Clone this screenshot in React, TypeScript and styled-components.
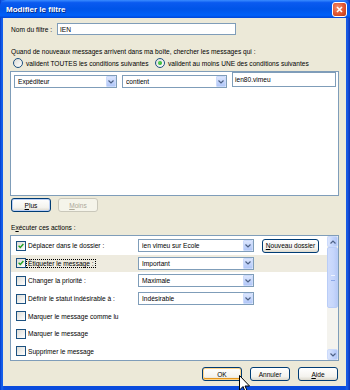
import React from "react";
import styled, { createGlobalStyle } from "styled-components";

const GlobalStyle = createGlobalStyle`
  html, body { margin: 0; padding: 0; background: #0842D6; }
  body {
    font-family: "Liberation Sans", Arial, sans-serif;
    font-size: 6.6px;
    color: #000;
  }
`;

const Window = styled.div`
  position: relative;
  width: 350px;
  height: 390px;
  display: flex;
  flex-direction: column;
  background: linear-gradient(to right, #0339C8 0px, #1665F0 2px, #0A4BDD 4px, #0A4BDD 345px, #1A5EE8 347px, #0A33B8 350px);
`;

const TitleBar = styled.div`
  height: 18px;
  flex: none;
  display: flex;
  align-items: center;
  justify-content: space-between;
  padding: 0 3px 0 6px;
  border-radius: 6px 6px 0 0;
  background: linear-gradient(#3A8CFF 0%, #0A5AF0 15%, #0054E8 50%, #0060F8 85%, #0046D8 100%);
`;

const Title = styled.span`
  color: #fff;
  font-weight: 700;
  font-size: 8px;
  text-shadow: 1px 1px 0 #0A2A80;
`;

const CloseBtn = styled.div`
  width: 13px;
  height: 13px;
  border: 1px solid #fff;
  border-radius: 3px;
  display: flex;
  align-items: center;
  justify-content: center;
  background: radial-gradient(circle at 35% 35%, #F28E6E, #E05530 55%, #B83A18);
`;

const Body = styled.div`
  flex: 1;
  display: flex;
  flex-direction: column;
  margin: 0 4px 4px 3px;
  padding: 0 7px;
  background: #ECE9D8;
`;

const NameRow = styled.div`
  margin-top: 5px;
  height: 12px;
  display: flex;
  align-items: center;
`;

const NameLabel = styled.span`
  width: 46px;
  padding-left: 1px;
`;

const TextField = styled.div<{ $w: number; $h: number }>`
  width: ${(p) => p.$w}px;
  height: ${(p) => p.$h}px;
  box-sizing: border-box;
  border: 1px solid #7F9DB9;
  background: #fff;
  padding-left: 2px;
  display: flex;
  align-items: center;
`;

const Line = styled.div<{ $mt: number }>`
  margin-top: ${(p) => p.$mt}px;
  height: 9px;
  line-height: 9px;
  padding-left: 1px;
  white-space: nowrap;
`;

const RadioRow = styled.div`
  margin-top: 2px;
  height: 10px;
  display: flex;
  align-items: center;
  padding-left: 3px;
`;

const RadioOption = styled.div<{ $w?: number }>`
  display: flex;
  align-items: center;
  gap: 3px;
  width: ${(p) => (p.$w ? `${p.$w}px` : "auto")};
  white-space: nowrap;
`;

const RadioCircle = styled.div<{ $on?: boolean }>`
  width: 10px;
  height: 10px;
  box-sizing: border-box;
  border-radius: 50%;
  border: 1px solid #1C5180;
  background: linear-gradient(135deg, #DCDCD7, #FFFFFF);
  display: flex;
  align-items: center;
  justify-content: center;
  flex: none;
  &::after {
    content: "";
    display: ${(p) => (p.$on ? "block" : "none")};
    width: 4px;
    height: 4px;
    border-radius: 50%;
    background: radial-gradient(circle at 40% 40%, #55D655, #21A121);
  }
`;

const ListBox = styled.div<{ $mt: number; $h: number }>`
  margin-top: ${(p) => p.$mt}px;
  height: ${(p) => p.$h}px;
  flex: none;
  box-sizing: border-box;
  border: 1px solid #7F9DB9;
  background: #fff;
  display: flex;
`;

const CondRow = styled.div`
  display: flex;
  align-items: flex-start;
  gap: 5px;
  padding-left: 3px;
  height: 16px;
`;

const Combo = styled.div<{ $w: number; $mt?: number }>`
  width: ${(p) => p.$w}px;
  height: 13px;
  margin-top: ${(p) => p.$mt ?? 0}px;
  box-sizing: border-box;
  border: 1px solid #7F9DB9;
  background: #fff;
  display: flex;
  align-items: center;
  padding-left: 3px;
  white-space: nowrap;
  flex: none;
`;

const ComboText = styled.span`
  flex: 1;
  overflow: hidden;
`;

const ArrowBtn = styled.div`
  width: 10px;
  height: 11px;
  box-sizing: border-box;
  border: 1px solid #CBDAFB;
  border-radius: 1px;
  background: linear-gradient(#DCE6FD, #C1D3FB 60%, #B2C7F7);
  display: flex;
  align-items: center;
  justify-content: center;
`;

const ButtonRow = styled.div<{ $mt: number; $end?: boolean }>`
  margin-top: ${(p) => p.$mt}px;
  height: 14px;
  display: flex;
  gap: ${(p) => (p.$end ? 8 : 7)}px;
  padding-left: ${(p) => (p.$end ? 0 : 1)}px;
  justify-content: ${(p) => (p.$end ? "flex-end" : "flex-start")};
  padding-right: ${(p) => (p.$end ? 1 : 0)}px;
`;

const Button = styled.div<{ $w?: number; $h?: number; $ml?: number; $default?: boolean; $focus?: boolean; $disabled?: boolean }>`
  width: ${(p) => p.$w ?? 40}px;
  height: ${(p) => p.$h ?? 14}px;
  margin-left: ${(p) => p.$ml ?? 0}px;
  box-sizing: border-box;
  border: 1px solid ${(p) => (p.$disabled ? "#C9C7BA" : "#003C74")};
  border-radius: 3px;
  background: ${(p) => (p.$disabled ? "#F5F4EA" : "linear-gradient(#FFFFFF, #F4F3EE 70%, #DCD8CC)")};
  color: ${(p) => (p.$disabled ? "#ACA899" : "#000")};
  display: flex;
  align-items: center;
  justify-content: center;
  white-space: nowrap;
  box-shadow: ${(p) =>
    p.$default
      ? "inset 0 0 0 1px #FFD58A, inset 0 -1px 0 1px #E5971F"
      : p.$focus
      ? "inset 0 0 0 1px #BCD0F6"
      : "none"};
  flex: none;
`;

const ActionList = styled.div`
  flex: 1;
  padding-top: 1px;
  display: flex;
  flex-direction: column;
`;

const ActionRow = styled.div<{ $selected?: boolean }>`
  height: 18px;
  display: flex;
  align-items: center;
  padding-left: 5px;
  background: ${(p) => (p.$selected ? "#EEEBDF" : "transparent")};
  white-space: nowrap;
`;

const Check = styled.div`
  width: 10px;
  height: 10px;
  box-sizing: border-box;
  border: 1px solid #1C5180;
  background: linear-gradient(135deg, #DCDCD7, #FFFFFF);
  display: flex;
  align-items: center;
  justify-content: center;
  flex: none;
`;

const ActionLabel = styled.span`
  width: 110px;
  margin-left: 2px;
  display: flex;
`;

const FocusText = styled.span<{ $focus?: boolean }>`
  padding: 0 1px;
  border: 1px dotted ${(p) => (p.$focus ? "#000" : "transparent")};
  margin-left: -2px;
`;

const Scrollbar = styled.div`
  width: 11px;
  flex: none;
  display: flex;
  flex-direction: column;
  background: #F4F3EE;
`;

const ScrollArrow = styled.div`
  height: 11px;
  box-sizing: border-box;
  border: 1px solid #CBDAFB;
  border-radius: 2px;
  background: linear-gradient(to right, #DCE6FD, #C1D3FB 60%, #B2C7F7);
  display: flex;
  align-items: center;
  justify-content: center;
`;

const Thumb = styled.div`
  height: 61px;
  box-sizing: border-box;
  border: 1px solid #B9CDF7;
  border-radius: 2px;
  background: linear-gradient(to right, #CFDCFC, #C6D6FB 60%, #B9CBF7);
  display: flex;
  align-items: center;
  justify-content: center;
  &::after {
    content: "";
    width: 4px;
    height: 4px;
    border-top: 1px solid #EEF3FE;
    border-bottom: 1px solid #8CA8E8;
  }
`;

const Track = styled.div`
  flex: 1;
`;

const Cursor = styled.svg`
  position: absolute;
  left: 239px;
  top: 375px;
`;

const Chevron = ({ up }: { up?: boolean }) => (
  <svg width="6" height="4" viewBox="0 0 6 4">
    <path d={up ? "M0.5 3.5 L3 1 L5.5 3.5" : "M0.5 0.5 L3 3 L5.5 0.5"} fill="none" stroke="#4D6185" strokeWidth="1.2" />
  </svg>
);

const Tick = () => (
  <svg width="6" height="6" viewBox="0 0 6 6">
    <path d="M0.6 2.8 L2.3 4.5 L5.4 1" fill="none" stroke="#21A121" strokeWidth="1.4" />
  </svg>
);

const actions = [
  { label: "Déplacer dans le dossier :", checked: true, value: "ien vimeu sur Ecole", extra: true },
  { label: "Étiqueter le message :", checked: true, value: "Important", selected: true },
  { label: "Changer la priorité :", value: "Maximale" },
  { label: "Définir le statut indésirable à :", value: "Indésirable" },
  { label: "Marquer le message comme lu" },
  { label: "Marquer le message" },
  { label: "Supprimer le message" },
];

export default function App() {
  return (
    <Window>
      <GlobalStyle />
      <TitleBar>
        <Title>Modifier le filtre</Title>
        <CloseBtn>
          <svg width="7" height="7" viewBox="0 0 7 7">
            <path d="M1 1 L6 6 M6 1 L1 6" stroke="#fff" strokeWidth="1.6" />
          </svg>
        </CloseBtn>
      </TitleBar>
      <Body>
        <NameRow>
          <NameLabel>Nom du filtre :</NameLabel>
          <TextField $w={179} $h={12}>IEN</TextField>
        </NameRow>
        <Line $mt={12}>Quand de nouveaux messages arrivent dans ma boîte, chercher les messages qui :</Line>
        <RadioRow>
          <RadioOption $w={142}>
            <RadioCircle />
            <span>valident TOUTES les conditions suivantes</span>
          </RadioOption>
          <RadioOption>
            <RadioCircle $on />
            <span>valident au moins UNE des conditions suivantes</span>
          </RadioOption>
        </RadioRow>
        <ListBox $mt={3} $h={125}>
          <CondRow>
            <Combo $w={103} $mt={3}>
              <ComboText>Expéditeur</ComboText>
              <ArrowBtn><Chevron /></ArrowBtn>
            </Combo>
            <Combo $w={105} $mt={3}>
              <ComboText>contient</ComboText>
              <ArrowBtn><Chevron /></ArrowBtn>
            </Combo>
            <TextField $w={104} $h={15}>ien80.vimeu</TextField>
          </CondRow>
        </ListBox>
        <ButtonRow $mt={2}>
          <Button $focus><span><u>P</u>lus</span></Button>
          <Button $disabled><span><u>M</u>oins</span></Button>
        </ButtonRow>
        <Line $mt={11}>E<u>x</u>écuter ces actions :</Line>
        <ListBox $mt={3} $h={126}>
          <ActionList>
            {actions.map((a) => (
              <ActionRow key={a.label} $selected={a.selected}>
                <Check>{a.checked && <Tick />}</Check>
                <ActionLabel>
                  <FocusText $focus={a.selected}>{a.label}</FocusText>
                </ActionLabel>
                {a.value && (
                  <Combo $w={116}>
                    <ComboText>{a.value}</ComboText>
                    <ArrowBtn><Chevron /></ArrowBtn>
                  </Combo>
                )}
                {a.extra && (
                  <Button $w={57} $h={14} $ml={8}>
                    <span><u>N</u>ouveau dossier</span>
                  </Button>
                )}
              </ActionRow>
            ))}
          </ActionList>
          <Scrollbar>
            <ScrollArrow><Chevron up /></ScrollArrow>
            <Thumb />
            <Track />
            <ScrollArrow><Chevron /></ScrollArrow>
          </Scrollbar>
        </ListBox>
        <ButtonRow $mt={6} $end>
          <Button $default>OK</Button>
          <Button>Annuler</Button>
          <Button><span><u>A</u>ide</span></Button>
        </ButtonRow>
      </Body>
      <Cursor width="12" height="19" viewBox="0 0 12 19">
        <path d="M0.5 0.5 L0.5 15 L4 11.5 L6.5 17.5 L8.5 16.5 L6 11 L10.5 11 Z" fill="#fff" stroke="#000" strokeWidth="1" />
      </Cursor>
    </Window>
  );
}
